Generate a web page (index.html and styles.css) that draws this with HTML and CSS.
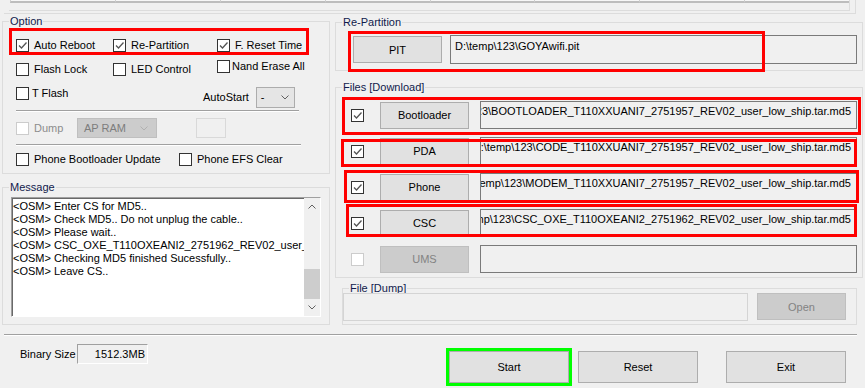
FILE: index.html
```html
<!DOCTYPE html>
<html lang="en">
<head>
    <meta charset="UTF-8">
    <title>Odin3</title>
    <link rel="stylesheet" href="styles.css">
</head>
<body>
<div class="app">
    <div class="ports">
        <div class="port-frame">
            <div class="port-cells">
                <span></span><span></span><span></span><span></span>
                <span></span><span></span><span></span><span></span>
            </div>
        </div>
    </div>

    <div class="main">
        <div class="col-left">
            <fieldset class="group option">
                <legend>Option</legend>
                <div class="opt-grid">
                    <label class="chk"><span class="cb"><svg class="tick" viewBox="0 0 11 11"><path d="M2 5.5L4.5 8L9.5 2.5"/></svg></span>Auto Reboot</label>
                    <label class="chk"><span class="cb"><svg class="tick" viewBox="0 0 11 11"><path d="M2 5.5L4.5 8L9.5 2.5"/></svg></span>Re-Partition</label>
                    <label class="chk"><span class="cb"><svg class="tick" viewBox="0 0 11 11"><path d="M2 5.5L4.5 8L9.5 2.5"/></svg></span>F. Reset Time</label>
                    <label class="chk"><span class="cb"></span>Flash Lock</label>
                    <label class="chk"><span class="cb"></span>LED Control</label>
                    <label class="chk nand"><span class="cb"></span>Nand Erase All</label>
                    <label class="chk tflash"><span class="cb"></span>T Flash</label>
                    <div class="autostart">
                        <span>AutoStart</span>
                        <div class="combo">
                            <span>-</span>
                            <svg class="chev" viewBox="0 0 8 5"><path d="M0.5 0.5L4 4L7.5 0.5"/></svg>
                        </div>
                    </div>
                </div>
                <div class="sep"></div>
                <div class="dump-row">
                    <label class="chk off"><span class="cb"></span>Dump</label>
                    <div class="combo combo-off">
                        <span>AP RAM</span>
                        <svg class="chev" viewBox="0 0 8 5"><path d="M0.5 0.5L4 4L7.5 0.5"/></svg>
                    </div>
                    <div class="blank-box"></div>
                </div>
                <div class="sep sep-wide"></div>
                <div class="phone-row">
                    <label class="chk pbu"><span class="cb"></span>Phone Bootloader Update</label>
                    <label class="chk"><span class="cb"></span>Phone EFS Clear</label>
                </div>
            </fieldset>

            <fieldset class="group message">
                <legend>Message</legend>
                <div class="log">
                    <div class="log-text">
                        <div>&lt;OSM&gt; Enter CS for MD5..</div>
                        <div>&lt;OSM&gt; Check MD5.. Do not unplug the cable..</div>
                        <div>&lt;OSM&gt; Please wait..</div>
                        <div>&lt;OSM&gt; CSC_OXE_T110OXEANI2_2751962_REV02_user_low_ship.tar.md5</div>
                        <div>&lt;OSM&gt; Checking MD5 finished Sucessfully..</div>
                        <div>&lt;OSM&gt; Leave CS..</div>
                    </div>
                    <div class="vscroll">
                        <div class="arrow"><svg class="chev" viewBox="0 0 8 5"><path d="M0.5 4.5L4 1L7.5 4.5"/></svg></div>
                        <div class="track"><div class="thumb"></div></div>
                        <div class="arrow"><svg class="chev" viewBox="0 0 8 5"><path d="M0.5 0.5L4 4L7.5 0.5"/></svg></div>
                    </div>
                </div>
            </fieldset>
        </div>

        <div class="col-right">
            <fieldset class="group repart">
                <legend>Re-Partition</legend>
                <div class="pit-row">
                    <button class="btn">PIT</button>
                    <div class="path">D:\temp\123\GOYAwifi.pit</div>
                </div>
            </fieldset>

            <fieldset class="group files">
                <legend>Files [Download]</legend>
                <div class="file-list">
                    <div class="file-row">
                        <span class="cb"><svg class="tick" viewBox="0 0 11 11"><path d="M2 5.5L4.5 8L9.5 2.5"/></svg></span>
                        <button class="btn">Bootloader</button>
                        <div class="path path-end"><span>D:\temp\123\BOOTLOADER_T110XXUANI7_2751957_REV02_user_low_ship.tar.md5</span></div>
                    </div>
                    <div class="file-row">
                        <span class="cb"><svg class="tick" viewBox="0 0 11 11"><path d="M2 5.5L4.5 8L9.5 2.5"/></svg></span>
                        <button class="btn">PDA</button>
                        <div class="path path-end"><span>D:\temp\123\CODE_T110XXUANI7_2751957_REV02_user_low_ship.tar.md5</span></div>
                    </div>
                    <div class="file-row">
                        <span class="cb"><svg class="tick" viewBox="0 0 11 11"><path d="M2 5.5L4.5 8L9.5 2.5"/></svg></span>
                        <button class="btn">Phone</button>
                        <div class="path path-end"><span>D:\temp\123\MODEM_T110XXUANI7_2751957_REV02_user_low_ship.tar.md5</span></div>
                    </div>
                    <div class="file-row">
                        <span class="cb"><svg class="tick" viewBox="0 0 11 11"><path d="M2 5.5L4.5 8L9.5 2.5"/></svg></span>
                        <button class="btn">CSC</button>
                        <div class="path path-end"><span>D:\temp\123\CSC_OXE_T110OXEANI2_2751962_REV02_user_low_ship.tar.md5</span></div>
                    </div>
                    <div class="file-row off">
                        <span class="cb"></span>
                        <button class="btn" disabled>UMS</button>
                        <div class="path"></div>
                    </div>
                </div>
            </fieldset>

            <fieldset class="group dumpfile">
                <legend>File [Dump]</legend>
                <div class="dump-file-row">
                    <div class="path path-off"></div>
                    <button class="btn" disabled>Open</button>
                </div>
            </fieldset>
        </div>
    </div>

    <div class="hsep"></div>

    <div class="bottom">
        <div class="binary">
            <span class="binary-label">Binary Size</span>
            <div class="binary-box">1512.3MB</div>
        </div>
        <div class="actions">
            <button class="btn btn-big btn-start">Start</button>
            <button class="btn btn-big btn-reset">Reset</button>
            <button class="btn btn-big btn-exit">Exit</button>
        </div>
    </div>

    <!-- annotation boxes drawn over the window -->
    <div class="mark mark-opt"></div>
    <div class="mark mark-pit"></div>
    <div class="mark mark-boot"></div>
    <div class="mark mark-pda"></div>
    <div class="mark mark-phone"></div>
    <div class="mark mark-csc"></div>
</div>
</body>
</html>
```

FILE: styles.css
```css
html, body {
    margin: 0;
    padding: 0;
    background-color: #f0f0f0;
}
body {
    font-family: 'Liberation Sans', Arial, sans-serif;
    font-size: 11px;
    line-height: 13px;
    color: #000;
}
.app {
    position: relative;
    width: 865px;
    height: 388px;
    overflow: hidden;
}

/* top port strip */
.ports {
    box-sizing: border-box;
    width: 852px;
    height: 14px;
    margin-left: 4px;
    padding: 0 5px;
    border-right: 1px solid #dcdcdc;
    border-bottom: 1px solid #dcdcdc;
}
.port-frame {
    box-sizing: border-box;
    height: 11px;
    padding-left: 1px;
    border-right: 1px solid #dcdcdc;
    border-bottom: 1px solid #dcdcdc;
}
.port-cells {
    display: flex;
    height: 3px;
}
.port-cells span {
    flex: 1;
    background-color: #f7f7f7;
    border-left: 1px solid #d0d0d0;
    border-bottom: 2px solid #bdbdbd;
}

/* layout */
.main {
    display: flex;
}
.col-left {
    width: 328px;
    margin-left: 2px;
    padding-top: 1px;
}
.col-right {
    width: 528px;
    margin-left: 5px;
    padding-top: 2px;
}

/* group boxes */
.group {
    margin: 0;
    padding: 0;
    min-width: 0;
    border: 1px solid #dcdcdc;
}
.group legend {
    margin-left: 6px;
    padding: 0 1px;
    height: 13px;
    line-height: 13px;
    color: #101a4c;
}

/* checkboxes */
.chk {
    display: flex;
    align-items: center;
    white-space: nowrap;
}
.cb {
    box-sizing: border-box;
    width: 13px;
    height: 13px;
    flex-shrink: 0;
    border: 1px solid #333;
    background-color: #fff;
    margin-right: 5px;
    display: flex;
}
.tick {
    width: 11px;
    height: 11px;
    fill: none;
    stroke: #555;
    stroke-width: 1.3;
}
.chk.nand .cb {
    margin-right: 2px;
}
.chk.tflash .cb {
    margin-right: 3px;
}
.chk.off {
    color: #8c8c8c;
}
.chk.off .cb,
.file-row.off .cb {
    border-color: #cccccc;
}

/* option group */
.option {
    height: 159px;
    box-sizing: border-box;
}
.opt-grid {
    display: grid;
    grid-template-columns: 97px 104px 1fr;
    grid-auto-rows: 24px;
    align-items: center;
    padding: 5px 0 0 13px;
}
.chk.nand {
    margin-bottom: 6px;
}
.autostart {
    grid-column: 2 / 4;
    grid-row: 3;
    align-self: end;
    margin: 0 0 -3px 90px;
    display: flex;
    align-items: center;
    gap: 7px;
}
.combo {
    box-sizing: border-box;
    width: 39px;
    height: 21px;
    display: flex;
    align-items: center;
    justify-content: space-between;
    padding: 0 5px 0 4px;
    background-color: #e5e5e5;
    border: 1px solid #acacac;
}
.chev {
    width: 8px;
    height: 5px;
    fill: none;
    stroke: #606060;
    stroke-width: 1;
}
.combo-off {
    width: 80px;
    height: 20px;
    padding: 0 8px 0 6px;
    background-color: #cccccc;
    border-color: #bfbfbf;
    color: #7d7d7d;
}
.combo-off .chev {
    stroke: #b0b0b0;
}
.sep {
    width: 283px;
    margin: 5px 0 0 13px;
    border-top: 1px solid #a0a0a0;
    border-bottom: 1px solid #fff;
}
.sep-wide {
    width: 285px;
    margin-top: 0;
}
.dump-row {
    display: flex;
    align-items: center;
    height: 32px;
    padding-left: 13px;
}
.dump-row .chk {
    width: 61px;
}
.blank-box {
    box-sizing: border-box;
    width: 30px;
    height: 20px;
    margin-left: 39px;
    border: 1px solid #d9d9d9;
}
.phone-row {
    display: flex;
    align-items: center;
    height: 27px;
    padding-left: 13px;
}
.chk.pbu {
    width: 163px;
}

/* message group */
.message {
    margin-top: 7px;
    padding-bottom: 7px;
}
.log {
    box-sizing: border-box;
    display: flex;
    width: 310px;
    height: 120px;
    margin: 3px 0 0 8px;
    background-color: #fff;
    border: 1px solid;
    border-color: #a0a0a0 #fff #fff #a0a0a0;
    box-shadow: inset 1px 1px 0 #696969;
}
.log-text {
    flex: 1;
    min-width: 0;
    overflow: hidden;
    white-space: nowrap;
    padding: 2px 0 0 1px;
}
.vscroll {
    width: 16px;
    display: flex;
    flex-direction: column;
    background-color: #f0f0f0;
}
.vscroll .arrow {
    height: 17px;
    display: flex;
    align-items: center;
    justify-content: center;
}
.vscroll .track {
    flex: 1;
}
.thumb {
    height: 30px;
    margin-top: 54px;
    background-color: #cdcdcd;
}

/* buttons */
.btn {
    box-sizing: border-box;
    width: 89px;
    height: 27px;
    padding: 0;
    flex-shrink: 0;
    font-family: inherit;
    font-size: 11px;
    color: #000;
    background-color: #e1e1e1;
    border: 1px solid #adadad;
    border-radius: 0;
}
.btn:disabled {
    background-color: #cccccc;
    border-color: #bfbfbf;
    color: #838383;
}

/* path fields */
.path {
    box-sizing: border-box;
    flex: 1;
    min-width: 0;
    height: 28px;
    padding: 3px 5px 0 4px;
    border: 1px solid #7a7a7a;
    background-color: #f0f0f0;
    white-space: nowrap;
    overflow: hidden;
}
.path-end {
    display: flex;
    justify-content: flex-end;
}
.path-end span {
    flex-shrink: 0;
}
.path-off {
    border-color: #d4d4d4;
}

/* right groups */
.pit-row {
    display: flex;
    align-items: center;
    gap: 8px;
    padding: 6px 5px 6px 17px;
}
.pit-row .path {
    height: 29px;
    padding-top: 4px;
}
.files {
    margin-top: 10px;
}
.file-list {
    display: flex;
    flex-direction: column;
    gap: 8px;
    padding: 7px 5px 4px 15px;
}
.file-row {
    display: flex;
    align-items: center;
    height: 28px;
}
.file-row .cb {
    margin-right: 16px;
}
.file-row .btn {
    margin-right: 11px;
}
.dumpfile {
    margin: 4px 6px 0 7px;
}
.dump-file-row {
    display: flex;
    align-items: flex-start;
    gap: 9px;
    margin-top: -2px;
    padding: 0 10px 3px 0;
}

/* bottom bar */
.hsep {
    margin: 9px 8px 0 4px;
    border-top: 1px solid #a0a0a0;
    border-bottom: 1px solid #fff;
}
.bottom {
    display: flex;
    padding: 0 19px 0 20px;
}
.binary {
    display: flex;
    align-items: center;
    margin-top: 8px;
    height: 20px;
}
.binary-label {
    width: 57px;
    white-space: nowrap;
}
.binary-box {
    box-sizing: border-box;
    width: 71px;
    height: 20px;
    line-height: 18px;
    padding-right: 2px;
    text-align: right;
    border: 1px solid;
    border-color: #a0a0a0 #fff #fff #a0a0a0;
}
.actions {
    display: flex;
    margin: 15px 0 0 auto;
}
.btn-big {
    width: 120px;
    height: 32px;
}
.btn-start {
    outline: 3px solid #00ff00;
}
.btn-reset {
    margin-left: 9px;
}
.btn-exit {
    margin-left: 28px;
}

/* red annotation boxes */
.mark {
    position: absolute;
    box-sizing: border-box;
    border: 3px solid #ff0000;
    pointer-events: none;
}
.mark-opt {
    left: 9px;
    top: 28px;
    width: 300px;
    height: 27px;
}
.mark-pit {
    left: 348px;
    top: 31px;
    width: 417px;
    height: 41px;
}
.mark-boot {
    left: 342px;
    top: 97px;
    width: 519px;
    height: 38px;
}
.mark-pda {
    left: 341px;
    top: 139px;
    width: 516px;
    height: 28px;
}
.mark-phone {
    left: 344px;
    top: 170px;
    width: 515px;
    height: 33px;
}
.mark-csc {
    left: 346px;
    top: 204px;
    width: 511px;
    height: 33px;
}
```
